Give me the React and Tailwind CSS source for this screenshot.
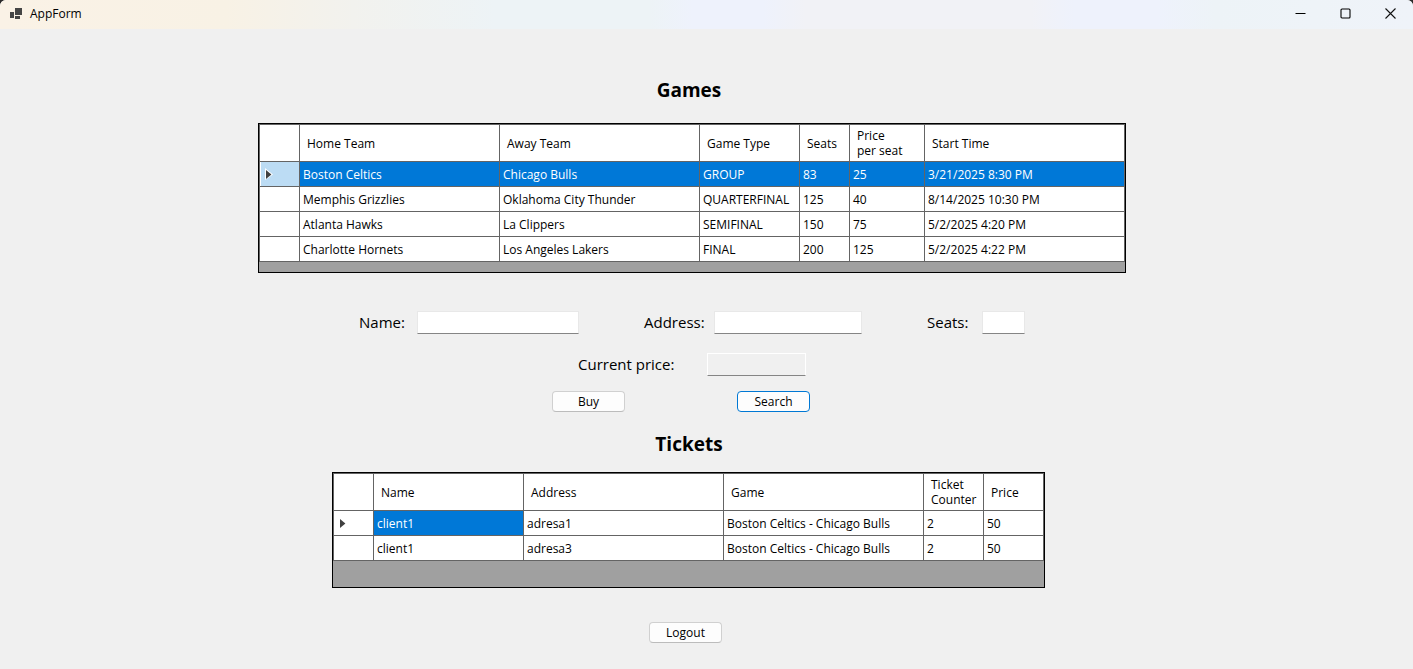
import { useState } from "react";

const games = [
  ["Boston Celtics", "Chicago Bulls", "GROUP", "83", "25", "3/21/2025 8:30 PM"],
  ["Memphis Grizzlies", "Oklahoma City Thunder", "QUARTERFINAL", "125", "40", "8/14/2025 10:30 PM"],
  ["Atlanta Hawks", "La Clippers", "SEMIFINAL", "150", "75", "5/2/2025 4:20 PM"],
  ["Charlotte Hornets", "Los Angeles Lakers", "FINAL", "200", "125", "5/2/2025 4:22 PM"],
];

const gameColumns = [
  { title: "Home Team", width: "w-[200px]" },
  { title: "Away Team", width: "w-[200px]" },
  { title: "Game Type", width: "w-[100px]" },
  { title: "Seats", width: "w-[50px]" },
  { title: "Price\nper seat", width: "w-[75px]" },
  { title: "Start Time", width: "w-[200px]" },
];

const tickets = [
  ["client1", "adresa1", "Boston Celtics - Chicago Bulls", "2", "50"],
  ["client1", "adresa3", "Boston Celtics - Chicago Bulls", "2", "50"],
];

const ticketColumns = [
  { title: "Name", width: "w-[150px]" },
  { title: "Address", width: "w-[200px]" },
  { title: "Game", width: "w-[200px]" },
  { title: "Ticket\nCounter", width: "w-[60px]" },
  { title: "Price", width: "w-[60px]" },
];

function Grid({ label, columns, rows, fullRowSelect, className }) {
  const line = "border-[#646464]";
  return (
    <div className={`border border-black bg-[#a0a0a0] ${className}`}>
      <table aria-label={label} className="w-full table-fixed border-separate border-spacing-0 bg-white text-left text-[12px] leading-[15px]">
        <thead>
          <tr className="h-[38px]">
            <th className={`w-[41px] border ${line}`} />
            {columns.map((c) => (
              <th key={c.title} scope="col" className={`border-y border-r py-0 pr-1 pl-[7px] font-normal whitespace-pre-line ${line} ${c.width}`}>
                {c.title}
              </th>
            ))}
          </tr>
        </thead>
        <tbody>
          {rows.map((row, r) => (
            <tr key={r} className="h-[25px]">
              <th
                scope="row"
                className={`border-x border-b p-0 pl-[5px] shadow-[inset_1px_0_0_#fff] ${line} ${r === 0 && fullRowSelect ? "bg-[#bcdcf4]" : "bg-white"}`}
              >
                {r === 0 && (
                  <svg width="8" height="12" viewBox="0 0 8 12" className="block" aria-hidden="true">
                    <path d="M0 0 L8 6.5 L0 12 Z" fill="#fff" />
                    <path d="M1 2 L6.4 6.5 L1 11 Z" fill="#404040" />
                  </svg>
                )}
              </th>
              {row.map((cell, c) => {
                const selected = r === 0 && (fullRowSelect || c === 0);
                return (
                  <td
                    key={c}
                    className={`overflow-hidden border-r border-b py-0 pr-0 pl-[3px] whitespace-nowrap ${line} ${selected ? "bg-[#0078d7] text-white" : "text-black"}`}
                  >
                    {cell}
                  </td>
                );
              })}
            </tr>
          ))}
        </tbody>
      </table>
    </div>
  );
}

function Field({ id, label, labelWidth, inputWidth, readOnly }) {
  const [value, setValue] = useState("");
  return (
    <div className="flex items-center">
      <label htmlFor={id} className={`text-[15px] leading-[23px] whitespace-nowrap ${labelWidth}`}>
        {label}
      </label>
      <input
        id={id}
        type="text"
        value={value}
        readOnly={readOnly}
        onChange={(e) => setValue(e.target.value)}
        className={`h-[23px] border px-1 text-[12px] outline-none ${inputWidth} ${readOnly ? "border-white border-b-[#858585] bg-[#f0f0f0]" : "border-[#e8e8e8] border-b-[#858585] bg-white"}`}
      />
    </div>
  );
}

function Button({ children, primary }) {
  return (
    <button
      type="button"
      className={`flex h-[21px] w-[73px] items-center justify-center rounded-[4px] border bg-[#fdfdfd] text-[12px] leading-[15px] ${primary ? "border-[#0078d4]" : "border-[#d0d0d0] border-b-[#bcbcbc]"}`}
    >
      {children}
    </button>
  );
}

function TitleBar() {
  return (
    <header className="flex h-[29px] items-start justify-between bg-[linear-gradient(90deg,#faf2e6_0%,#f8f2e5_16%,#f2f2ee_25%,#edf3f6_35%,#edf3f6_46%,#eef2fc_49%,#eef2fc_54%,#f1f2f6_57%,#f1f2f6_73%,#eef2fc_76%,#eef2fc_82%,#edf3f7_86%,#eff3f9_100%)]">
      <div className="flex h-[27px] items-center pl-[10px]">
        <svg width="12" height="12" viewBox="0 0 12 12" aria-hidden="true" shapeRendering="crispEdges" fill="#454545">
          <rect x="5" y="0" width="7" height="7" />
          <rect x="0" y="4" width="4" height="6" />
          <rect x="5" y="8" width="5" height="3" />
        </svg>
        <span className="pl-2 text-[12px] leading-[15px]">AppForm</span>
      </div>
      <div className="flex h-[27px]">
        <button type="button" aria-label="Minimize" className="grid w-[45px] place-items-center">
          <svg width="11" height="11" viewBox="0 0 11 11" fill="none" stroke="#000">
            <path d="M0.5 5.5 H10.5" />
          </svg>
        </button>
        <button type="button" aria-label="Maximize" className="grid w-[45px] place-items-center">
          <svg width="11" height="11" viewBox="0 0 11 11" fill="none" stroke="#000">
            <rect x="1" y="1" width="9" height="9" rx="1" strokeWidth="1.1" />
          </svg>
        </button>
        <button type="button" aria-label="Close" className="grid w-[45px] place-items-center">
          <svg width="11" height="11" viewBox="0 0 11 11" fill="none" stroke="#111" strokeWidth="1.1">
            <path d="M0.5 0.5 L10.5 10.5 M10.5 0.5 L0.5 10.5" />
          </svg>
        </button>
      </div>
    </header>
  );
}

export default function App() {
  return (
    <div className="min-h-screen bg-[#2a2a2a] font-['Open_Sans','Noto_Sans',sans-serif] text-black">
      <div className="flex min-h-screen flex-col overflow-hidden rounded-t-md bg-[#f0f0f0]">
        <TitleBar />
        <main className="flex flex-col items-center pt-[47px] pr-[29px] pb-6">
          <h1 className="pr-[6px] text-[19px] leading-7 font-bold">Games</h1>
          <Grid label="Games" columns={gameColumns} rows={games} fullRowSelect className="mt-[19px] h-[150px] w-[868px]" />

          <form className="flex flex-col items-center" onSubmit={(e) => e.preventDefault()}>
            <div className="mt-[38px] flex gap-[65px]">
              <Field id="name" label="Name:" labelWidth="w-[58px]" inputWidth="w-[162px]" />
              <Field id="address" label="Address:" labelWidth="w-[70px]" inputWidth="w-[148px]" />
              <Field id="seats" label="Seats:" labelWidth="w-[55px]" inputWidth="w-[43px]" />
            </div>
            <div className="mt-[19px]">
              <Field id="price" label="Current price:" labelWidth="w-[129px]" inputWidth="w-[99px]" readOnly />
            </div>
            <div className="mt-[15px] flex gap-28 pr-[22px]">
              <Button>Buy</Button>
              <Button primary>Search</Button>
            </div>
          </form>

          <h2 className="mt-[18px] pr-[6px] text-[19px] leading-7 font-bold">Tickets</h2>
          <Grid label="Tickets" columns={ticketColumns} rows={tickets} className="mt-[14px] mr-[7px] h-[116px] w-[713px]" />
          <div className="mt-[34px] pr-[13px]">
            <Button>Logout</Button>
          </div>
        </main>
      </div>
    </div>
  );
}
